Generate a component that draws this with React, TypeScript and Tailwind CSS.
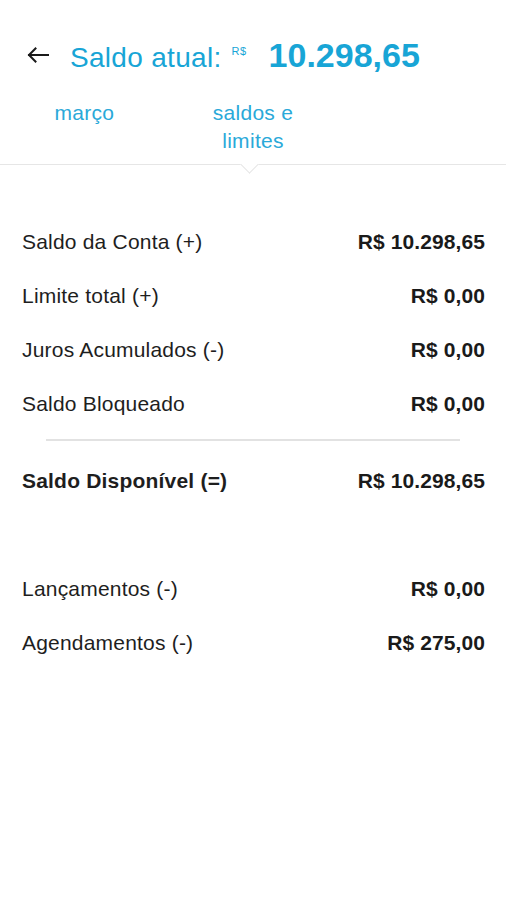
import React from "react";

const rows1 = [
  { label: "Saldo da Conta (+)", value: "R$ 10.298,65" },
  { label: "Limite total (+)", value: "R$ 0,00" },
  { label: "Juros Acumulados (-)", value: "R$ 0,00" },
  { label: "Saldo Bloqueado", value: "R$ 0,00" },
];

const rows2 = [
  { label: "Lançamentos (-)", value: "R$ 0,00" },
  { label: "Agendamentos (-)", value: "R$ 275,00" },
];

function Row({ label, value, bold }: { label: string; value: string; bold?: boolean }) {
  return (
    <div className="flex h-[54px] items-center justify-between pl-[22px] pr-[21px]">
      <span className={`text-[21px] tracking-[0.2px] text-[#1e1e1e] ${bold ? "font-bold" : "font-normal"}`}>{label}</span>
      <span className="text-[21px] font-bold tracking-[0.1px] text-[#1a1a1a]">{value}</span>
    </div>
  );
}

export default function App() {
  return (
    <div className="min-h-[900px] w-[506px] bg-white" style={{ fontFamily: '"Liberation Sans", Arial, sans-serif' }}>
      <div className="mt-[27px] flex h-[56px] items-center">
        <div className="ml-[27px] flex h-[16px] w-[22px] items-center">
          <svg width="22" height="16" viewBox="0 0 22 16" fill="none" stroke="#1a1a1a" strokeWidth="2" strokeLinecap="square">
            <path d="M2 8 H21" />
            <path d="M8.5 1.5 L2 8 L8.5 14.5" />
          </svg>
        </div>
        <div className="ml-[21px] flex items-baseline text-[#18a5d6]">
          <span className="text-[28px] tracking-[0.3px]">Saldo atual:</span>
          <span className="ml-[10px] self-start pt-[16px] text-[11px] leading-none tracking-[0.5px]">R$</span>
          <span className="ml-[22px] text-[34px] font-bold">10.298,65</span>
        </div>
      </div>
      <div className="relative grid grid-cols-3 border-b border-[#e6e6e6] pb-[9px] pt-[16px] text-[21px] leading-[28px] tracking-[0.3px] text-[#2aa9d9]">
        <div className="text-center">março</div>
        <div className="text-center">
          saldos e
          <br />
          limites
        </div>
        <div />
        <div className="absolute bottom-[-7px] left-[243px] h-[13px] w-[13px] rotate-45 border-b border-r border-[#e6e6e6] bg-white" />
      </div>
      <div className="pt-[50px]">
        {rows1.map((r) => (
          <Row key={r.label} {...r} />
        ))}
        <div className="mx-[46px] mt-[8px] h-[2px] bg-[#e2e2e2]" />
        <div className="mt-[13px]">
          <Row label="Saldo Disponível (=)" value="R$ 10.298,65" bold />
        </div>
        <div className="mt-[54px]">
          {rows2.map((r) => (
            <Row key={r.label} {...r} />
          ))}
        </div>
      </div>
    </div>
  );
}
